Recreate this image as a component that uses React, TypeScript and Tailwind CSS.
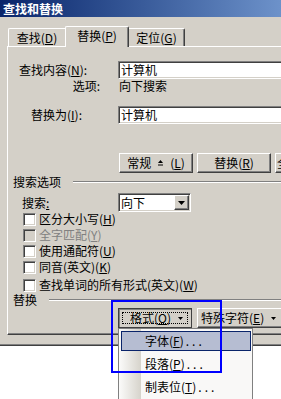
import type { ReactNode } from 'react';

const raised =
  'bg-[#d4d0c8] border border-t-white border-l-white border-r-[#404040] border-b-[#404040] shadow-[inset_-1px_-1px_#808080]';
const sunken =
  'border border-t-[#808080] border-l-[#808080] border-r-white border-b-white shadow-[inset_1px_1px_#404040,inset_-1px_-1px_#d4d0c8]';

function U({ children }: { children: ReactNode }) {
  return <span className="underline underline-offset-[1px]">{children}</span>;
}

function DownArrow({ w = 5 }: { w?: number }) {
  const h = Math.ceil(w / 2);
  return (
    <svg width={w} height={h} viewBox={`0 0 ${w} ${h}`} className="shrink-0">
      <polygon points={`0,0 ${w},0 ${w / 2},${h}`} fill="#000" />
    </svg>
  );
}

function LessIcon() {
  return (
    <svg width="5" height="6" viewBox="0 0 5 6" className="shrink-0">
      <polygon points="0,3 5,3 2.5,0" fill="#000" />
      <rect x="0" y="4.5" width="5" height="1" fill="#000" />
    </svg>
  );
}

function SectionTitle({ label }: { label: string }) {
  return (
    <div className="flex items-center h-[14px] pl-[5px] leading-none">
      <span>{label}</span>
      <div className="flex-1 ml-[12px] h-[2px] border-t border-t-[#808080] border-b border-b-white" />
    </div>
  );
}

function Check({ label, disabled, className = '' }: { label: ReactNode; disabled?: boolean; className?: string }) {
  return (
    <div className={`flex items-center h-[16px] pl-[15px] leading-none ${className}`}>
      <div className={`w-[13px] h-[13px] shrink-0 ${sunken} ${disabled ? 'bg-[#d4d0c8]' : 'bg-white'}`} />
      <span className={`ml-[3px] whitespace-nowrap ${disabled ? 'text-[#808080]' : ''}`}>{label}</span>
    </div>
  );
}

const menuItems: { label: string; key: string; active?: boolean }[] = [
  { label: '字体', key: 'F', active: true },
  { label: '段落', key: 'P' },
  { label: '制表位', key: 'T' },
];

export default function App() {
  return (
    <div className="relative w-[281px] h-[399px] overflow-hidden bg-white text-[12px] text-black font-['Noto_Sans_CJK_SC',sans-serif]">
      <div className="h-[346px] bg-[#d4d0c8] border-b border-b-[#404040] shadow-[inset_0_-1px_#808080] flex flex-col">
        <div className="h-[17px] shrink-0 bg-linear-to-r from-[#0a246a] to-[#6d92ca] flex items-center pl-[3px] text-white font-bold leading-none">
          查找和替换
        </div>

        {/* tabs */}
        <div className="relative z-10 flex items-start h-[30px] -mb-px pl-[8px] shrink-0 leading-none">
          <div className="mt-[11px] w-[57px] h-[18px] shrink-0 flex items-center justify-center border-t border-l border-t-white border-l-white rounded-tl-[2px]">
            查找(<U>D</U>)
          </div>
          <div className="mt-[9px] w-[64px] h-[21px] shrink-0 pb-[2px] bg-[#d4d0c8] flex items-center justify-center border-t border-l border-r border-t-white border-l-white border-r-[#404040] shadow-[inset_-1px_0_#808080] rounded-t-[2px]">
            替换(<U>P</U>)
          </div>
          <div className="mt-[11px] w-[56px] h-[18px] shrink-0 flex items-center justify-center border-t border-r border-t-white border-r-[#404040] shadow-[inset_-1px_0_#808080] rounded-tr-[2px]">
            定位(<U>G</U>)
          </div>
        </div>

        {/* panel */}
        <div className="ml-[7px] w-[300px] h-[289px] shrink-0 border-t border-l border-b border-t-white border-l-white border-b-[#404040] shadow-[inset_0_-1px_#808080] flex flex-col leading-none">
          <div className="mt-[14px] h-[18px] flex items-center">
            <div className="w-[110px] shrink-0 pl-[11px] whitespace-nowrap">
              查找内容(<U>N</U>):
            </div>
            <div className={`flex-1 h-[18px] bg-white flex items-center pl-[2px] ${sunken}`}>计算机</div>
          </div>
          <div className="h-[14px] flex items-center">
            <div className="w-[110px] shrink-0 pr-[18px] text-right">选项:</div>
            <div className="pl-[1px]">向下搜索</div>
          </div>
          <div className="mt-[13px] h-[18px] flex items-center">
            <div className="w-[110px] shrink-0 pl-[23px] whitespace-nowrap">
              替换为(<U>I</U>):
            </div>
            <div className={`flex-1 h-[18px] bg-white flex items-center pl-[2px] ${sunken}`}>计算机</div>
          </div>

          <div className="mt-[29px] h-[20px] ml-[111px] flex gap-[4px]">
            <div className={`w-[74px] h-[20px] shrink-0 flex items-center justify-center gap-[7px] whitespace-nowrap ${raised}`}>
              <span>常规</span>
              <LessIcon />
              <span>
                (<U>L</U>)
              </span>
            </div>
            <div className={`w-[74px] h-[20px] shrink-0 flex items-center justify-center whitespace-nowrap ${raised}`}>
              替换(<U>R</U>)
            </div>
            <div className={`w-[74px] h-[20px] shrink-0 flex items-center pl-[1px] whitespace-nowrap ${raised}`}>
              全部替换(<U>A</U>)
            </div>
          </div>

          <div className="mt-[2px]">
            <SectionTitle label="搜索选项" />
          </div>

          <div className="mt-[4px] h-[19px] flex items-center">
            <div className="w-[110px] shrink-0 pl-[14px]">
              搜索<U>:</U>
            </div>
            <div className={`w-[73px] h-[19px] shrink-0 bg-white flex items-center ${sunken}`}>
              <span className="flex-1 pl-[2px]">向下</span>
              <div className={`w-[15px] h-[15px] mr-px flex items-center justify-center ${raised}`}>
                <DownArrow w={7} />
              </div>
            </div>
          </div>

          <div className="-mt-px flex flex-col">
            <Check label={<>区分大小写(<U>H</U>)</>} />
            <Check label={<>全字匹配(<U>Y</U>)</>} disabled />
            <Check label={<>使用通配符(<U>U</U>)</>} />
            <Check label={<>同音(英文)(<U>K</U>)</>} />
            <Check className="mt-[2px]" label={<>查找单词的所有形式(英文)(<U>W</U>)</>} />
          </div>

          <SectionTitle label="替换" />

          <div className="mt-[1px] h-[20px] ml-[110px] flex gap-[5px]">
            <div className="relative w-[74px] h-[20px] shrink-0 border border-[#404040] shadow-[inset_1px_1px_#808080] flex items-center pl-[11px] gap-[7px] whitespace-nowrap">
              <div className="absolute inset-[3px] border border-dotted border-black" />
              <span>
                格式(<U>O</U>)
              </span>
              <DownArrow />
            </div>
            <div className={`w-[90px] h-[20px] shrink-0 flex items-center pl-[3px] gap-[7px] whitespace-nowrap ${raised}`}>
              <span>
                特殊字符(<U>E</U>)
              </span>
              <DownArrow />
            </div>
          </div>
        </div>
      </div>

      {/* dropdown menu */}
      <div className="absolute left-[118px] top-[328px] w-[135px] h-[80px] border border-[#808080] bg-[linear-gradient(90deg,#fbfbfa_0px,#d6d3cb_22px,#f9f8f7_22px)] pt-px flex flex-col leading-none">
        {menuItems.map((it) => (
          <div key={it.key} className="h-[23px] pl-[2px] pr-px pt-px pb-[2px]">
            <div
              className={`h-full flex items-center pl-[23px] border whitespace-nowrap ${
                it.active ? 'bg-[#b6bdd2] border-[#0a246a]' : 'border-transparent'
              }`}
            >
              {it.label}(<U>{it.key}</U>)<span className="tracking-[3px] ml-[2px]">...</span>
            </div>
          </div>
        ))}
      </div>

      {/* annotation frame */}
      <div className="absolute left-[111px] top-[300px] w-[111px] h-[73px] border-2 border-[#0000ff]" />
    </div>
  );
}
